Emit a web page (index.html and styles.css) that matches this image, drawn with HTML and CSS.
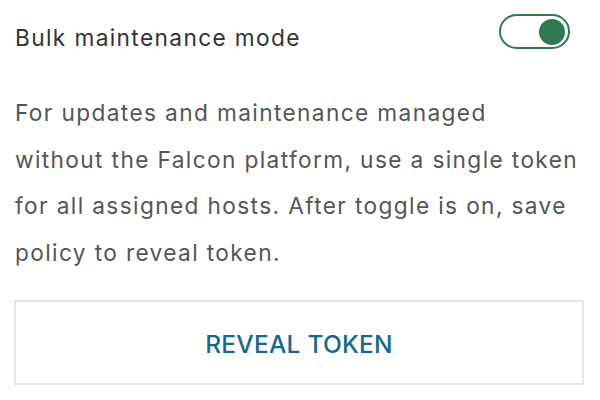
FILE: index.html
```html
<!DOCTYPE html>
<html>
<head>
<meta charset="utf-8">
<link rel="stylesheet" href="styles.css">
</head>
<body>
<div class="panel">
  <div class="header">
    <span class="title">Bulk maintenance mode</span>
    <span class="toggle" role="switch" aria-checked="true"><span class="knob"></span></span>
  </div>
  <p class="desc">For updates and maintenance managed without the Falcon platform, use a single token for all assigned hosts. After toggle is on, save policy to reveal token.</p>
  <button class="reveal">REVEAL TOKEN</button>
</div>
</body>
</html>
```

FILE: styles.css
```css
html, body {
  margin: 0;
  padding: 0;
  background: #ffffff;
}
.panel {
  padding: 14px 16px 0 14px;
  font-family: Inter, "Noto Sans", sans-serif;
}
.header {
  display: flex;
  justify-content: space-between;
  align-items: flex-start;
}
.title {
  font-size: 22.7px;
  line-height: 28px;
  margin-top: 10px;
  letter-spacing: 0.06em;
  color: #333333;
  padding-left: 1px;
}
.toggle {
  box-sizing: border-box;
  width: 71px;
  height: 35px;
  border: 2px solid #2e7a4e;
  border-radius: 18px;
  display: flex;
  align-items: center;
  justify-content: flex-end;
  padding-right: 3px;
  margin-right: 14px;
}
.knob {
  width: 26px;
  height: 26px;
  border-radius: 50%;
  background: #2e7a4e;
}
.desc {
  max-width: 566px;
  margin: 38px 0 0 0;
  padding-left: 1px;
  font-size: 22.7px;
  line-height: 46.5px;
  letter-spacing: 0.06em;
  color: #555555;
}
.reveal {
  display: block;
  box-sizing: border-box;
  width: 570px;
  height: 85px;
  margin-top: 24px;
  padding-top: 4px;
  background: #ffffff;
  border: 2px solid #e6e6e6;
  font-family: Inter, "Noto Sans", sans-serif;
  font-size: 24.5px;
  font-weight: 500;
  letter-spacing: 0.01em;
  color: #17698a;
}
```
